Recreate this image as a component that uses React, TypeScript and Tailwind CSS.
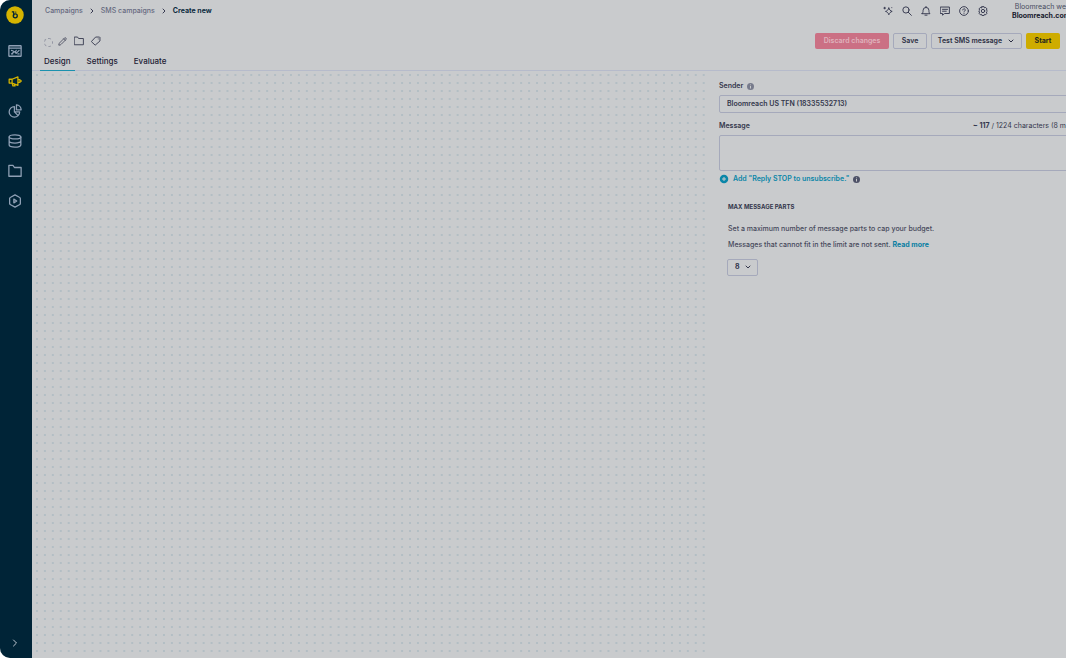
import type { ReactNode } from 'react';
import { ChevronDown, ChevronRight, Pencil } from 'lucide-react';

interface IconProps {
  size?: number;
  className?: string;
  children?: ReactNode;
}

function Svg({ size = 12, className = '', children }: IconProps) {
  return (
    <svg
      width={size}
      height={size}
      viewBox="0 0 24 24"
      fill="none"
      stroke="currentColor"
      strokeWidth="2.2"
      strokeLinecap="round"
      strokeLinejoin="round"
      className={`shrink-0 ${className}`}
      aria-hidden="true"
    >
      {children}
    </svg>
  );
}

function Logo() {
  return (
    <svg width="18" height="18" viewBox="0 0 34 34" className="shrink-0" role="img" aria-label="Bloomreach">
      <circle cx="17" cy="17" r="16.5" fill="#d5b400" />
      <path d="M11 11h3.500v8" fill="none" stroke="#002437" strokeWidth="2.2" />
      <circle cx="17.5" cy="18.6" r="3.8" fill="none" stroke="#002437" strokeWidth="2.4" />
      <circle cx="18.5" cy="11.5" r="1.2" fill="#002437" />
    </svg>
  );
}

const NAV_ITEMS = [
  {
    label: 'Dashboards',
    icon: (
      <Svg size={14}>
        <rect x="1.5" y="3" width="21" height="18" rx="1" />
        <path d="M2 7h20M6 17l5-4 3 3 5-5M6 11l3 1M14 11l-1 2M17 17h2M6 17h2" />
      </Svg>
    ),
  },
  {
    label: 'Campaigns',
    active: true,
    icon: (
      <Svg size={14}>
        <path d="M2 9v6.500h5l10 4V5L7 9zM7 9v6.500l1.500 5h3.500l-1-3.500M17 9.500h3.500v5H17M20.500 12H23" />
      </Svg>
    ),
  },
  {
    label: 'Analyses',
    icon: (
      <Svg size={14}>
        <path d="M11 4.500a9 9 0 1 0 9 9h-9zM14.500 1.500v8.500h8a8.500 8.500 0 0 0-8-8.500zM11 13.500l6 6" />
      </Svg>
    ),
  },
  {
    label: 'Data',
    icon: (
      <Svg size={14}>
        <ellipse cx="12" cy="5" rx="10" ry="3.500" />
        <path d="M2 5v14c0 2 4.500 3.500 10 3.500s10-1.500 10-3.500V5M2 12c0 2 4.500 3.500 10 3.500s10-1.500 10-3.500" />
      </Svg>
    ),
  },
  {
    label: 'Assets',
    icon: (
      <Svg size={14}>
        <path d="M1.500 2.500h7l2.500 3.500h11.500v15h-21z" />
      </Svg>
    ),
  },
  {
    label: 'Automation',
    icon: (
      <Svg size={14}>
        <path d="M12 1.500l7.500 4a3 3 0 0 1 1.700 2.500v8a3 3 0 0 1-1.700 2.500l-7.500 4-7.500-4A3 3 0 0 1 2.800 16V8a3 3 0 0 1 1.700-2.500zM10 8.800v6.400l5-3.200z" />
      </Svg>
    ),
  },
];

const HEADER_ACTIONS = [
  {
    label: 'Assistant',
    icon: (
      <Svg size={10}>
        <path d="M14 5c1 4 4 7 8 8-4 1-7 4-8 8-1-4-4-7-8-8 4-1 7-4 8-8zM4 3v4M2 5h4M21 4v.1" />
      </Svg>
    ),
  },
  {
    label: 'Search',
    icon: (
      <Svg size={10}>
        <circle cx="9.500" cy="9.500" r="7.500" />
        <path d="M15 15l7.500 7.500" />
      </Svg>
    ),
  },
  {
    label: 'Notifications',
    icon: (
      <Svg size={10}>
        <path d="M2.500 18.500h19c-2-2-2.500-4-2.500-8a7 7 0 0 0-14 0c0 4-.5 6-2.500 8zM12 1v2M9.500 22h5" />
      </Svg>
    ),
  },
  {
    label: 'Messages',
    icon: (
      <Svg size={10}>
        <path d="M1.500 2.500h21v15.500H11l-5 4v-4H1.500zM6 8h12M6 12.500h9" />
      </Svg>
    ),
  },
  {
    label: 'Help',
    icon: (
      <Svg size={10}>
        <circle cx="12" cy="12" r="10.500" />
        <path d="M9 9.500a3 3 0 1 1 4.500 2.600c-1 .6-1.500 1-1.500 2M12 17.500v.2" />
      </Svg>
    ),
  },
  {
    label: 'Settings',
    icon: (
      <Svg size={10}>
        <path d="M9.500 1.500h5l1 3 3-1 3 3.500-1.500 3 2.500 2-2.500 2.500 1.500 3-3 3.500-3-1-1 3h-5l-1-3-3 1-3-3.500 1.500-3L1.500 12 4 10 2.500 7l3-3.500 3 1z" />
        <circle cx="12" cy="12" r="4" />
      </Svg>
    ),
  },
];

const TABS = ['Design', 'Settings', 'Evaluate'];

function InfoDot({ className }: { className: string }) {
  return (
    <svg width="7" height="7" viewBox="0 0 14 14" className={className} role="img" aria-label="More info">
      <circle cx="7" cy="7" r="7" fill="currentColor" />
      <path d="M7 6v5M7 3v1.500" stroke="#c9cbcd" strokeWidth="2" />
    </svg>
  );
}

function Sidebar() {
  return (
    <nav className="flex w-8 shrink-0 flex-col items-center bg-[#002437] pt-[6px] pr-[2px] pb-[7px] text-[#8fa0b5]">
      <Logo />
      <div className="mt-[19px] flex flex-col gap-[14px]">
        {NAV_ITEMS.map((item) => (
          <button
            key={item.label}
            aria-label={item.label}
            className={`flex h-4 w-4 items-center justify-center ${item.active ? 'text-[#d5b400]' : ''}`}
          >
            {item.icon}
          </button>
        ))}
      </div>
      <button aria-label="Expand menu" className="mt-auto flex h-4 w-4 items-center justify-center text-[#c0c8d2]">
        <ChevronRight size={12} />
      </button>
    </nav>
  );
}

function Header() {
  return (
    <header className="border-b border-[#b6bbcb]">
      <div className="flex h-[22px] items-center pl-[13px]">
        <div className="flex items-center gap-[5px] text-[7px] font-medium text-[#65697f]">
          <a href="#campaigns">Campaigns</a>
          <ChevronRight size={8} strokeWidth={3} className="text-[#393c52]" />
          <a href="#sms">SMS campaigns</a>
          <ChevronRight size={8} strokeWidth={3} className="text-[#393c52]" />
          <span className="font-bold text-[#0d2c41]">Create new</span>
        </div>
        <div className="ml-auto flex items-center gap-[9px] text-[#30334a]">
          {HEADER_ACTIONS.map((action) => (
            <button key={action.label} aria-label={action.label}>
              {action.icon}
            </button>
          ))}
        </div>
        <div className="ml-6 w-[54px] text-[7px] leading-[9px] whitespace-nowrap">
          <div className="text-right text-[#484b5f]">Bloomreach we</div>
          <div className="font-bold text-[#17192c]">Bloomreach.com</div>
        </div>
      </div>

      <div className="mt-[11px] flex items-center justify-between pr-[6px] pl-3">
        <div className="flex items-center gap-[7px] text-[#383b50]">
          <span className="mt-[2px] h-[9px] w-[9px] rounded-full border border-dashed border-[#9194a2]" />
          <button aria-label="Rename" className="-ml-[2px]">
            <Pencil size={9} />
          </button>
          <button aria-label="Move to folder">
            <Svg size={10}>
              <path d="M1.500 2.500h7l2.500 3.500h11.500v15h-21z" />
            </Svg>
          </button>
          <button aria-label="Tags">
            <Svg size={10}>
              <path d="M12 2.500h8.500l1 1V12L10 22 1.500 14zM17.500 7v.1" />
            </Svg>
          </button>
        </div>
        <div className="flex gap-1 text-[7px] font-semibold text-[#2b2e43]">
          <button className="h-4 w-[74px] rounded-[2px] bg-[#cb7084] text-[#dfb4be]">Discard changes</button>
          <button className="h-4 w-[34px] rounded-[2px] border border-[#a5a9bb]">Save</button>
          <button className="flex h-4 w-[91px] items-center justify-center gap-[5px] rounded-[2px] border border-[#a5a9bb]">
            Test SMS message
            <ChevronDown size={8} strokeWidth={3} />
          </button>
          <button className="h-4 w-[34px] rounded-[2px] bg-[#ceac00] font-bold text-[#26261f]">Start</button>
        </div>
      </div>

      <div className="mt-[2px] flex pl-2 text-[8px] font-medium text-[#1c2034]">
        {TABS.map((tab) => (
          <button
            key={tab}
            className={`mr-2 -mb-px h-5 border-b px-1 ${
              tab === 'Design' ? 'border-[#1b91ae]' : 'border-transparent'
            }`}
          >
            {tab}
          </button>
        ))}
      </div>
    </header>
  );
}

function MessagePanel() {
  return (
    <aside className="w-[358px] shrink-0 overflow-hidden pt-[10px] pl-[11px] text-[7px] text-[#34374c]">
      <div className="w-[400px]">
        <div className="flex h-[10px] items-center gap-1 font-semibold">
          <label htmlFor="sender">Sender</label>
          <InfoDot className="text-[#777b8c]" />
        </div>
        <select
          id="sender"
          className="mt-1 block h-[18px] w-full appearance-none rounded-[2px] border border-[#a5a9bb] pl-[7px] font-semibold"
        >
          <option>Bloomreach US TFN (18335532713)</option>
        </select>

        <div className="mt-2 flex h-[10px] w-[347px] items-center justify-between">
          <label htmlFor="message" className="font-semibold">
            Message
          </label>
          <div className="flex gap-[2px] whitespace-nowrap">
            <span className="font-bold">~ 117</span>
            <span>/ 1224 characters</span>
            <span>(8 m</span>
          </div>
        </div>
        <textarea
          id="message"
          className="mt-1 block h-9 w-full resize-none rounded-[2px] border border-[#a5a9bb]"
        />
      </div>

      <div className="mt-[3px] flex h-[10px] items-center">
        <button className="flex items-center gap-1 font-semibold text-[#0a86a8]">
          <svg width="10" height="10" viewBox="0 0 20 20" aria-hidden="true">
            <circle cx="10" cy="10" r="8.500" fill="currentColor" />
            <path d="M10 6v8M6 10h8" stroke="#c9cbcd" strokeWidth="2" />
          </svg>
          Add "Reply STOP to unsubscribe."
        </button>
        <InfoDot className="ml-1 text-[#4d5167]" />
      </div>

      <section className="mt-[18px] pl-[9px]">
        <h2 id="max-parts" className="text-[6px] leading-[10px] font-bold">
          MAX MESSAGE PARTS
        </h2>
        <div className="mt-[9px] text-[7px] leading-4 font-medium text-[#45485a]">
          <p>Set a maximum number of message parts to cap your budget.</p>
          <p>
            Messages that cannot fit in the limit are not sent.{' '}
            <a href="#limits" className="font-bold text-[#0a7fa2]">
              Read more
            </a>
          </p>
        </div>
        <div className="relative mt-[6px] -ml-px w-[31px]">
          <select
            aria-labelledby="max-parts"
            className="block h-[17px] w-full appearance-none rounded-[2px] border border-[#a5a9bb] pl-[7px] font-bold"
          >
            <option>8</option>
          </select>
          <ChevronDown
            size={8}
            strokeWidth={3}
            className="pointer-events-none absolute top-1 right-[6px]"
          />
        </div>
      </section>
    </aside>
  );
}

export default function App() {
  return (
    <div className="min-h-screen bg-white font-['Inter','Liberation_Sans',sans-serif]">
      <div className="flex min-h-screen overflow-hidden rounded-l-[10px] bg-[#c9cbcd]">
        <Sidebar />
        <div className="flex min-w-0 flex-1 flex-col">
          <Header />
          <main className="flex flex-1">
            <div className="flex-1 bg-[radial-gradient(circle_at_5px_4px,#b3bec4_1px,transparent_1px)] bg-size-[8px_8px] [background-repeat:round_repeat]" />
            <MessagePanel />
          </main>
        </div>
      </div>
    </div>
  );
}
